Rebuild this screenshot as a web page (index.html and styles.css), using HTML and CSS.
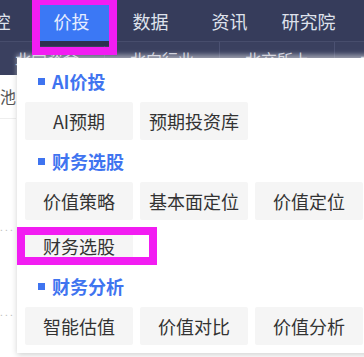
FILE: index.html
```html
<!DOCTYPE html>
<html lang="zh-CN">
<head>
    <meta charset="UTF-8">
    <meta name="viewport" content="width=device-width, initial-scale=1.0">
    <title>价投</title>
    <link rel="stylesheet" href="styles.css">
</head>
<body>
    <header class="topbar">
        <nav class="main-nav">
            <a class="tab">监控</a>
            <a class="tab active">价投</a>
            <a class="tab">数据</a>
            <a class="tab">资讯</a>
            <a class="tab">研究院</a>
        </nav>
    </header>
    <div class="subbar">
        <a class="sub-item">北向资金</a>
        <a class="sub-item">北向行业</a>
        <a class="sub-item">北交所上</a>
        <a class="sub-item">北向持股</a>
    </div>

    <div class="page">
        <div class="side-row">股票池</div>
        <div class="side-dots dots-1">. . .</div>
        <div class="side-dots dots-2">. . .</div>
    </div>

    <div class="dropdown">
        <div class="group">
            <h3 class="group-title">AI价投</h3>
            <div class="grid">
                <a class="item">AI预期</a>
                <a class="item">预期投资库</a>
            </div>
        </div>
        <div class="group">
            <h3 class="group-title">财务选股</h3>
            <div class="grid">
                <a class="item">价值策略</a>
                <a class="item">基本面定位</a>
                <a class="item">价值定位</a>
                <a class="item">财务选股</a>
            </div>
        </div>
        <div class="group">
            <h3 class="group-title">财务分析</h3>
            <div class="grid">
                <a class="item">智能估值</a>
                <a class="item">价值对比</a>
                <a class="item">价值分析</a>
            </div>
        </div>
    </div>

    <div class="mark mark-tab"></div>
    <div class="mark mark-item"></div>
</body>
</html>
```

FILE: styles.css
```css
* {
    box-sizing: border-box;
}
body {
    margin: 0;
    width: 364px;
    height: 357px;
    overflow: hidden;
    position: relative;
    background: #fff;
    font-family: "Noto Sans CJK SC", "Noto Sans", sans-serif;
}
a {
    text-decoration: none;
    cursor: pointer;
}
.topbar {
    height: 41px;
    background: #363c5b;
}
.main-nav {
    display: flex;
    margin-left: -47px;
    height: 100%;
}
.tab {
    position: relative;
    width: 79px;
    flex: none;
    display: flex;
    align-items: center;
    justify-content: center;
    font-size: 18px;
    color: #dfe2ec;
}
.tab.active {
    background: #3b78f5;
    color: #e6edff;
}
.tab.active::after {
    content: "";
    position: absolute;
    left: 0;
    right: 0;
    bottom: -5px;
    height: 5px;
    background: #2c3150;
}
.subbar {
    display: flex;
    height: 34px;
    margin-left: -10px;
    background: #3a405f;
    border-top: 1px solid #474d6c;
}
.sub-item {
    width: 115px;
    flex: none;
    display: flex;
    align-items: center;
    justify-content: center;
    font-size: 16px;
    color: #c9ccd8;
    border-right: 1px solid #4b5172;
}
.page {
    height: 282px;
    background: #fff;
}
.side-row {
    height: 44px;
    margin-left: -32px;
    width: 48px;
    padding-top: 9px;
    font-size: 16px;
    color: #555;
    border-bottom: 1px solid #eee;
}
.side-dots {
    position: absolute;
    left: 0;
    font-size: 10px;
    line-height: 10px;
    color: #bdbdbd;
}
.dots-1 {
    top: 222px;
}
.dots-2 {
    top: 307px;
}
.dropdown {
    position: absolute;
    left: 17px;
    top: 58px;
    width: 380px;
    height: 295px;
    padding: 2px 8px 8px;
    background: #fff;
    box-shadow: 0 2px 6px rgba(0, 0, 0, 0.18), 0 -3px 5px rgba(255, 255, 255, 0.55);
}
.group-title {
    display: flex;
    align-items: center;
    height: 42px;
    margin: 0;
    padding-left: 13px;
    font-size: 18px;
    font-weight: bold;
    color: #3f74f0;
}
.group-title::before {
    content: "";
    width: 7px;
    height: 7px;
    margin-right: 7px;
    background: #3f74f0;
}
.grid {
    display: grid;
    grid-template-columns: repeat(3, 108px);
    gap: 7px;
}
.item {
    height: 38px;
    display: flex;
    align-items: center;
    justify-content: center;
    background: #f5f5f5;
    border-radius: 2px;
    font-size: 18px;
    color: #333;
}
.mark {
    position: absolute;
    border: 8px solid #f21df2;
}
.mark-tab {
    left: 32px;
    top: -3px;
    width: 85px;
    height: 58px;
}
.mark-item {
    left: 17px;
    top: 227px;
    width: 140px;
    height: 38px;
}
```
